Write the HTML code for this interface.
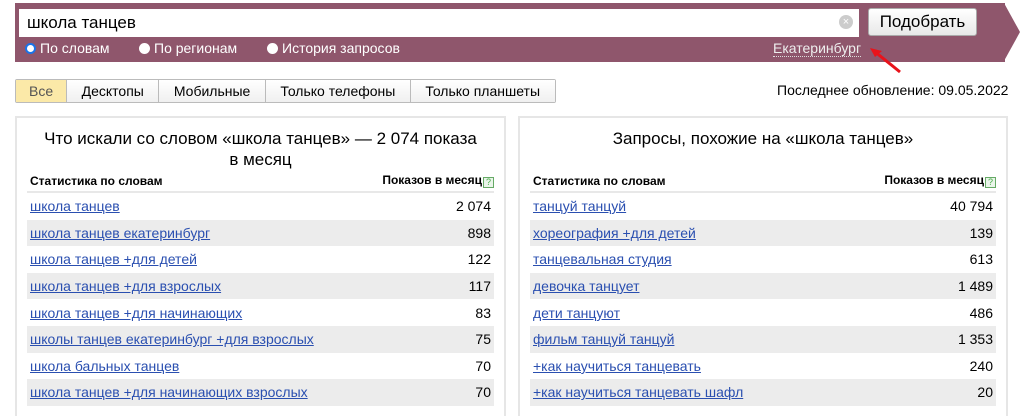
<!DOCTYPE html>
<html><head><meta charset="utf-8"><style>
*{box-sizing:border-box;margin:0;padding:0}
body{width:1024px;height:410px;overflow:hidden;background:#fff;font-family:"Liberation Sans",Arial,sans-serif;color:#000;position:relative}
.band{position:absolute;left:15px;top:3px;width:990px;height:59px;background:#8f566c}
.tip{position:absolute;left:1004px;top:3px;width:0;height:0;border-top:29.5px solid transparent;border-bottom:29.5px solid transparent;border-left:16px solid #8f566c}
.inp{position:absolute;left:19px;top:9px;width:840px;height:28px;background:#fff;font-size:17px;padding:3px 8px;line-height:22px}
.clr{position:absolute;left:839px;top:15px;width:14px;height:14px;border-radius:50%;background:#ccc;color:#fff;font-size:11px;line-height:14px;text-align:center}
.btn{position:absolute;left:868px;top:8px;width:109px;height:28px;background:linear-gradient(#fff,#e8e8e8);border:1px solid #aaa;border-radius:3px;font-size:17px;text-align:center;line-height:26px}
.rad{position:absolute;top:40px;font-size:14px;color:#fff;line-height:16px}
.rad i{display:inline-block;width:11px;height:11px;border-radius:50%;background:#fff;vertical-align:-1px;margin-right:4px}
.rad i.on{border:2.5px solid #1a73e8;background:#fff}
.city{position:absolute;left:773px;top:40px;font-size:14px;color:#eee;border-bottom:1px dotted #ddd;line-height:16px}
.tabs{position:absolute;left:15px;top:79px;height:24px;display:flex;border:1px solid #bbb;border-radius:2px;font-size:14px}
.tabs div{padding:0 14.5px;line-height:22px;border-left:1px solid #bbb;background:linear-gradient(#fff,#f0f0f0)}
.tabs div:first-child{border-left:0;background:#fbe9a8;color:#555;padding:0 13px}
.upd{position:absolute;left:777px;top:82px;font-size:14px}
.panel{position:absolute;top:116px;height:300px;border:2px solid #e6e6e6;border-bottom:0}
.panel h2{font-weight:normal;font-size:17px;text-align:center;line-height:21px;margin-top:10px;height:42px}
table{border-collapse:collapse;margin:0 10px;width:calc(100% - 20px);font-size:14px}
th{font-size:12px;font-weight:bold;text-align:left;height:22px;border-bottom:2px solid #e8e8e8;padding:0 3px}
th.r{text-align:right;padding-right:0}
td{height:26.6px;padding:0 3px}
td a{color:#2a4fb0;text-decoration:underline}
td.n{text-align:right;padding-right:3px}
tr:nth-child(even) td{background:#ececec}
.q{display:inline-block;width:11px;height:11px;border:1px solid #6a6;background:#eaf5ea;color:#4a4;font-size:9px;line-height:9px;text-align:center;vertical-align:-1px;font-weight:normal;margin-left:1px}
</style></head><body>
<div class="band"></div><div class="tip"></div>
<div class="inp">школа танцев</div><div class="clr">×</div>
<div class="btn">Подобрать</div>
<div class="rad" style="left:25px"><i class="on"></i>По словам</div>
<div class="rad" style="left:139px"><i></i>По регионам</div>
<div class="rad" style="left:267px"><i></i>История запросов</div>
<div class="city">Екатеринбург</div>
<svg style="position:absolute;left:868px;top:46px" width="36" height="30"><line x1="32" y1="26" x2="6" y2="5" stroke="#e8131b" stroke-width="3"/><polygon points="2,2 14,5 7,11" fill="#e8131b"/></svg>
<div class="tabs"><div>Все</div><div>Десктопы</div><div>Мобильные</div><div>Только телефоны</div><div>Только планшеты</div></div>
<div class="upd">Последнее обновление: 09.05.2022</div>
<div class="panel" style="left:15px;width:491px"><h2>Что искали со словом «школа танцев» — 2 074 показа<br>в месяц</h2>
<table><tr><th>Статистика по словам</th><th class="r">Показов в месяц<span class="q">?</span></th></tr></table>
<table><tbody>
<tr><td><a>школа танцев</a></td><td class="n">2 074</td></tr>
<tr><td><a>школа танцев екатеринбург</a></td><td class="n">898</td></tr>
<tr><td><a>школа танцев +для детей</a></td><td class="n">122</td></tr>
<tr><td><a>школа танцев +для взрослых</a></td><td class="n">117</td></tr>
<tr><td><a>школа танцев +для начинающих</a></td><td class="n">83</td></tr>
<tr><td><a>школы танцев екатеринбург +для взрослых</a></td><td class="n">75</td></tr>
<tr><td><a>школа бальных танцев</a></td><td class="n">70</td></tr>
<tr><td><a>школа танцев +для начинающих взрослых</a></td><td class="n">70</td></tr>
</tbody></table></div>
<div class="panel" style="left:518px;width:490px"><h2>Запросы, похожие на «школа танцев»</h2>
<table><tr><th>Статистика по словам</th><th class="r">Показов в месяц<span class="q">?</span></th></tr></table>
<table><tbody>
<tr><td><a>танцуй танцуй</a></td><td class="n">40 794</td></tr>
<tr><td><a>хореография +для детей</a></td><td class="n">139</td></tr>
<tr><td><a>танцевальная студия</a></td><td class="n">613</td></tr>
<tr><td><a>девочка танцует</a></td><td class="n">1 489</td></tr>
<tr><td><a>дети танцуют</a></td><td class="n">486</td></tr>
<tr><td><a>фильм танцуй танцуй</a></td><td class="n">1 353</td></tr>
<tr><td><a>+как научиться танцевать</a></td><td class="n">240</td></tr>
<tr><td><a>+как научиться танцевать шафл</a></td><td class="n">20</td></tr>
</tbody></table></div>
</body></html>
